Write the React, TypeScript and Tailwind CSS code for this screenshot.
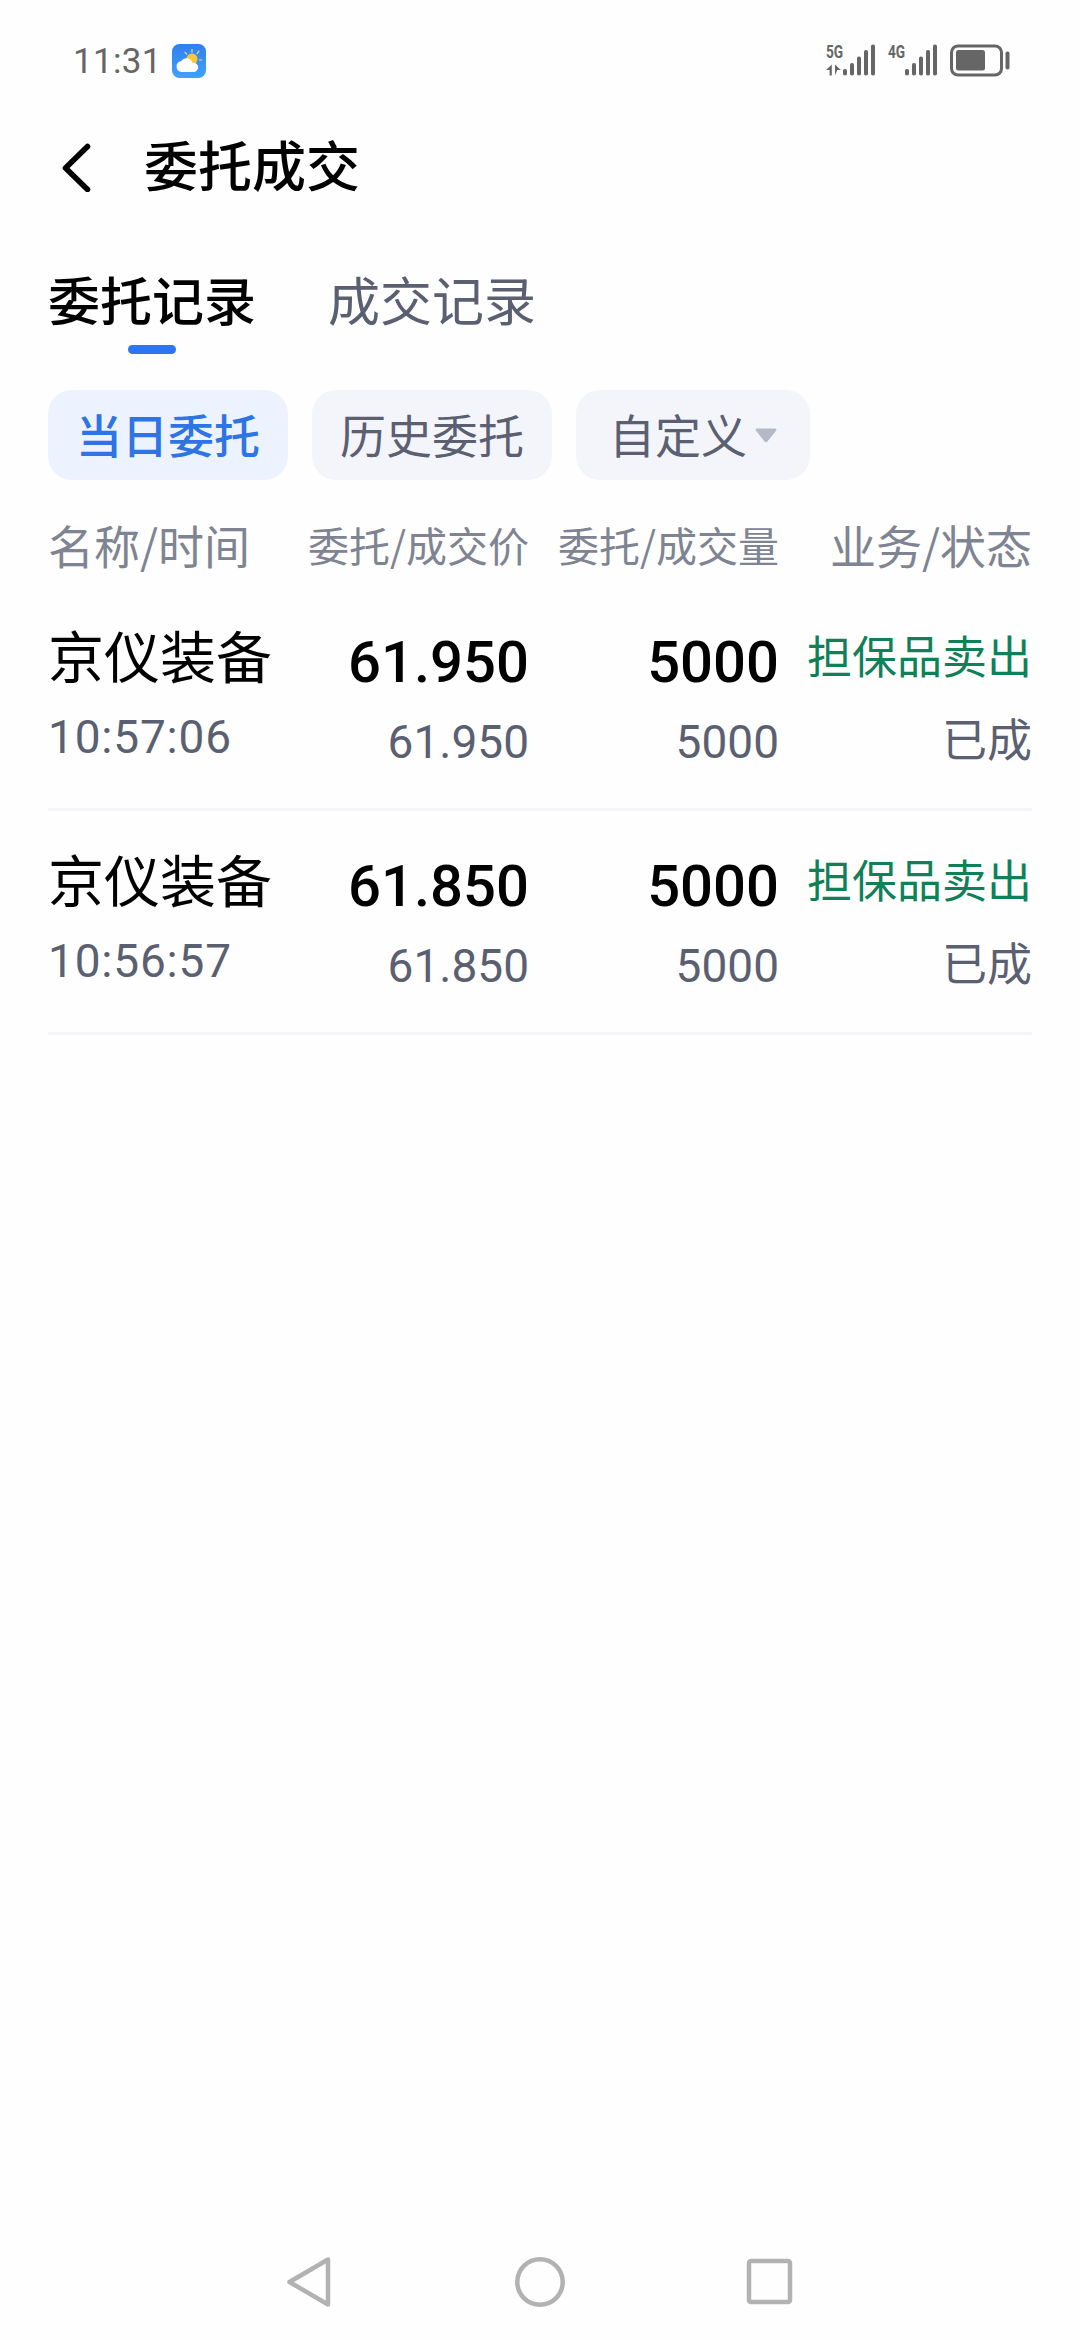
import clsx from 'clsx'

interface Order {
  id: number
  name: string
  time: string
  orderPrice: string
  dealPrice: string
  orderQty: string
  dealQty: string
  business: string
  status: string
}

const orders: Order[] = [
  {
    id: 1,
    name: '京仪装备',
    time: '10:57:06',
    orderPrice: '61.950',
    dealPrice: '61.950',
    orderQty: '5000',
    dealQty: '5000',
    business: '担保品卖出',
    status: '已成',
  },
  {
    id: 2,
    name: '京仪装备',
    time: '10:56:57',
    orderPrice: '61.850',
    dealPrice: '61.850',
    orderQty: '5000',
    dealQty: '5000',
    business: '担保品卖出',
    status: '已成',
  },
]

const columns = 'grid grid-cols-[224px_257px_250px_253px]'
const digits = "font-['Roboto','Noto_Sans_CJK_SC',sans-serif]"

function WeatherIcon() {
  return (
    <svg className="w-[34px] h-[34px]" viewBox="0 0 34 34" fill="none">
      <defs>
        <linearGradient id="sky" x1="0" y1="0" x2="0" y2="1">
          <stop offset="0" stopColor="#2f7ff0" />
          <stop offset="1" stopColor="#41a2fc" />
        </linearGradient>
      </defs>
      <rect width="34" height="34" rx="7.5" fill="url(#sky)" />
      <path
        d="M20 8.2V5.5M25 9.6L27 7.2M27.4 16H29.5M14.6 10.2L13 8.4"
        stroke="#e8dc8a"
        strokeWidth="1.2"
        strokeLinecap="round"
      />
      <circle cx="20" cy="15" r="5.5" fill="#fbc834" />
      <path
        d="M9.8 28a5.6 5.6 0 0 1-.6-11.1 6.3 6.3 0 0 1 11.2 1.9A4.7 4.7 0 1 1 20.6 28z"
        fill="#fff"
      />
    </svg>
  )
}

function SignalBars({ label, transfer = false }: { label: string; transfer?: boolean }) {
  return (
    <div className="relative w-[50px] h-[34px]">
      <span className="absolute left-0 -top-0.5 origin-left scale-x-[0.72] text-[19px] leading-[19px] font-bold text-[#666] font-['Roboto',sans-serif]">
        {label}
      </span>
      <svg className="w-[50px] h-[34px]" viewBox="0 0 50 34" fill="#666">
        {transfer && <path d="M0 26L5.8 20.5V31.5H3.6V26zM9 20.5L14.8 26H11.2L9 31.5z" />}
        <rect x="17" y="25" width="4" height="6.5" rx="1.8" />
        <rect x="24" y="19" width="4" height="12.5" rx="1.8" />
        <rect x="31" y="12.5" width="4" height="19" rx="1.8" />
        <rect x="38" y="6" width="4" height="25.5" rx="1.8" />
        <rect x="45" y="0.5" width="4" height="31" rx="1.8" />
      </svg>
    </div>
  )
}

function BatteryIcon() {
  return (
    <svg className="w-[60px] h-[34px]" viewBox="0 0 60 34" fill="none">
      <rect x="1.5" y="2" width="50" height="29" rx="6.5" stroke="#666" strokeWidth="3" />
      <rect x="6" y="6" width="29" height="20.5" rx="2.5" fill="#666" />
      <rect x="55.5" y="7.5" width="4" height="18" rx="1.8" fill="#666" />
    </svg>
  )
}

function StatusBar() {
  return (
    <div className="flex items-center justify-between h-[122px] pl-[73px] pr-[70px]">
      <div className="flex items-center gap-[10px]">
        <span className={clsx('text-[35px] leading-none tracking-[0.3px] text-[#666]', digits)}>11:31</span>
        <WeatherIcon />
      </div>
      <div className="flex items-center gap-3">
        <SignalBars label="5G" transfer />
        <SignalBars label="4G" />
        <BatteryIcon />
      </div>
    </div>
  )
}

function Header() {
  return (
    <header className="flex items-center h-[90px] pl-[60px]">
      <svg className="w-8 h-[50px]" viewBox="0 0 32 50" fill="none">
        <path
          d="M27.5 4.5L5.5 26L27.5 47.5"
          stroke="#000"
          strokeWidth="5.6"
          strokeLinecap="round"
          strokeLinejoin="round"
        />
      </svg>
      <h1 className="ml-[52px] pb-1.5 text-[54px] leading-none font-medium">委托成交</h1>
    </header>
  )
}

function Tab({ label, active = false }: { label: string; active?: boolean }) {
  return (
    <button className="flex flex-col items-center">
      <span className={clsx('text-[52px] leading-[70px]', active ? 'font-medium text-black' : 'text-[#5a6072]')}>
        {label}
      </span>
      {active && <span className="mt-[11px] w-12 h-[9px] rounded-full bg-[#2c76ee]" />}
    </button>
  )
}

function FilterPill({ label, active = false, dropdown = false }: { label: string; active?: boolean; dropdown?: boolean }) {
  return (
    <button
      className={clsx(
        'flex items-center justify-center h-[90px] rounded-3xl text-[46px] leading-none',
        dropdown ? 'w-[234px]' : 'w-[240px]',
        active ? 'bg-[#ecf3fe] font-medium text-[#2f74e4]' : 'bg-[#f4f5fa] text-[#5a6072]'
      )}
    >
      <span className="pb-1">{label}</span>
      {dropdown && (
        <svg className="ml-2 w-[22px] h-[15px]" viewBox="0 0 22 15" fill="#b3b9c7">
          <path d="M2 0.5H20Q22.2 0.8 21 2.8L12.4 13.4Q11 15 9.6 13.4L1 2.8Q-.2 .8 2 .5z" />
        </svg>
      )}
    </button>
  )
}

function OrderRow({ order }: { order: Order }) {
  return (
    <li className={clsx(columns, 'h-56 border-b-[3px] border-[#f4f5fa]')}>
      <div className="pt-[27px]">
        <p className="text-[56px] leading-[80px]">{order.name}</p>
        <p className={clsx('text-[46px] leading-[86px] tracking-[0.8px] text-[#5a6072]', digits)}>{order.time}</p>
      </div>
      <div className={clsx('pt-[35px] text-right', digits)}>
        <p className="text-[58px] leading-[80px] font-medium">{order.orderPrice}</p>
        <p className="text-[46px] leading-[80px] text-[#5a6072]">{order.dealPrice}</p>
      </div>
      <div className={clsx('pt-[35px] text-right', digits)}>
        <p className="text-[58px] leading-[80px] font-medium">{order.orderQty}</p>
        <p className="text-[46px] leading-[80px] text-[#5a6072]">{order.dealQty}</p>
      </div>
      <div className="pt-7 text-right text-[45px]">
        <p className="leading-[80px] text-[#108058]">{order.business}</p>
        <p className="leading-[86px] text-[#5a6072]">{order.status}</p>
      </div>
    </li>
  )
}

function NavigationBar() {
  return (
    <nav className="mt-auto flex items-center justify-center gap-[180px] h-[116px]">
      <svg className="w-[50px] h-[50px]" viewBox="0 0 50 50" fill="none" stroke="#b2b2b2" strokeWidth="4.5" strokeLinejoin="round">
        <path d="M43 2.5V47.5L4.5 25z" />
      </svg>
      <svg className="w-[50px] h-[50px]" viewBox="0 0 50 50" fill="none" stroke="#b2b2b2" strokeWidth="4.5">
        <circle cx="25" cy="25" r="22.7" />
      </svg>
      <svg className="w-[50px] h-[50px]" viewBox="0 0 50 50" fill="none" stroke="#b2b2b2" strokeWidth="4.5">
        <rect x="4" y="4" width="41" height="41" rx="2" />
      </svg>
    </nav>
  )
}

export default function App() {
  return (
    <div className="flex flex-col w-[1080px] h-[2340px] bg-[#fefefe] text-black font-['Noto_Sans_CJK_SC',sans-serif]">
      <StatusBar />
      <Header />
      <main className="px-12">
        <div className="flex items-start gap-[72px] h-[178px] pt-[52px]">
          <Tab label="委托记录" active />
          <Tab label="成交记录" />
        </div>
        <div className="flex gap-6">
          <FilterPill label="当日委托" active />
          <FilterPill label="历史委托" />
          <FilterPill label="自定义" dropdown />
        </div>
        <div className={clsx(columns, 'items-center h-[107px] pt-[22px] text-[#7f8492] text-[46px] whitespace-nowrap')}>
          <span>名称/时间</span>
          <span className="text-right text-[41px]">委托/成交价</span>
          <span className="text-right text-[41px]">委托/成交量</span>
          <span className="text-right">业务/状态</span>
        </div>
        <ul>
          {orders.map((order) => (
            <OrderRow key={order.id} order={order} />
          ))}
        </ul>
      </main>
      <NavigationBar />
    </div>
  )
}
